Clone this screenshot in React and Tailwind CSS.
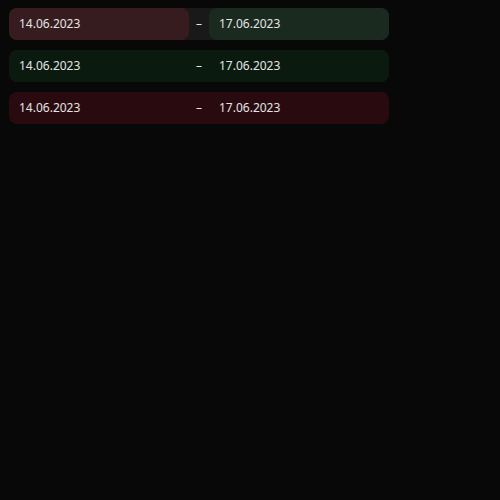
import React from 'react'

const rows = [
  { wrap: 'bg-[#191919]', start: 'bg-[#371c1f]', end: 'bg-[#1b2a1f]' },
  { wrap: 'bg-[#0b1a0f]', start: '', end: '' },
  { wrap: 'bg-[#290b0f]', start: '', end: '' },
]

const DateRange = ({ wrap, start, end }) => (
  <div className={`flex items-center w-[380px] h-8 rounded-lg ${wrap}`}>
    <div className={`flex items-center w-[180px] h-full rounded-lg pl-[10px] ${start}`}>14.06.2023</div>
    <div className="w-5 text-center">–</div>
    <div className={`flex items-center w-[180px] h-full rounded-lg pl-[10px] ${end}`}>17.06.2023</div>
  </div>
)

const App = () => {
  return (
    <div
      className="min-h-[500px] bg-[#080808] pt-2 pl-[9px] flex flex-col gap-[10px] text-[12px] text-[#e4e4e4]"
      style={{ fontFamily: '"Noto Sans", sans-serif' }}
    >
      {rows.map((r, i) => (
        <DateRange key={i} {...r} />
      ))}
    </div>
  )
}

export default App
